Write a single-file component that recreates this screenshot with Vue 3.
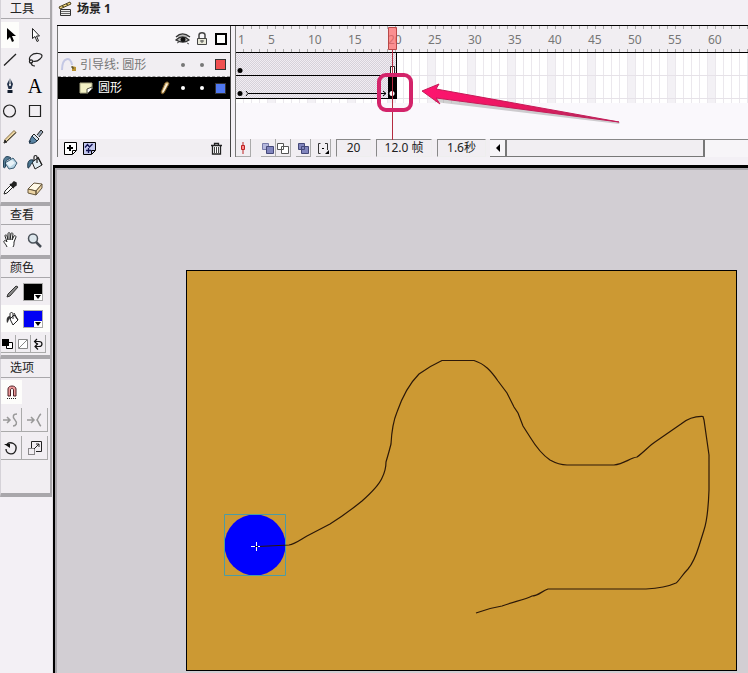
<script setup>
const majors = Array.from({ length: 13 }, (_, i) => i * 5)

const tools = [
  { name: 'Arrow', icon: 'arrow', active: true },
  { name: 'Subselect', icon: 'subselect' },
  { name: 'Line', icon: 'line' },
  { name: 'Lasso', icon: 'lasso' },
  { name: 'Pen', icon: 'pen' },
  { name: 'Text', letter: 'A' },
  { name: 'Oval', icon: 'oval' },
  { name: 'Rectangle', icon: 'rect' },
  { name: 'Pencil', icon: 'pencil' },
  { name: 'Brush', icon: 'brush' },
  { name: 'Ink bottle', icon: 'ink' },
  { name: 'Paint bucket', icon: 'bucket' },
  { name: 'Eyedropper', icon: 'dropper' },
  { name: 'Eraser', icon: 'eraser' },
]
</script>

<template>
  <svg class="defs" aria-hidden="true">
    <symbol id="arrow" viewBox="0 0 18 18"><path d="M6 2v12l3-3 2 5 2-1-2-5h4z" fill="#000" /></symbol>
    <symbol id="subselect" viewBox="0 0 18 18"><path d="M6.500 2.500v10l2.500-2 2 5 1.500-.7-2-4.800h3z" fill="#fff" stroke="#222" /></symbol>
    <symbol id="line" viewBox="0 0 18 18"><path d="M3 14.500 15 3" stroke="#222" stroke-width="1.300" /></symbol>
    <symbol id="lasso" viewBox="0 0 18 18"><g fill="none" stroke="#222" stroke-width="1.200"><path d="M4 10C2 6 6 2 12 2.500c5 .5 5 3 2 5.500-2 2-5 3-8 2" /><circle cx="5" cy="10.500" r="1.600" /><path d="M5 11c0 3 1 4 4 4" /></g></symbol>
    <symbol id="pen" viewBox="0 0 18 18"><path d="M9 1 6 7l1.500 5h3L12 7z" fill="#23324a" /><path d="M9 1v7" stroke="#fff" /><circle cx="9" cy="8" r="1" fill="#fff" /><path d="M6.500 13h5v3h-5z" fill="#111c2c" /></symbol>
    <symbol id="oval" viewBox="0 0 18 18"><circle cx="8.500" cy="9" r="6" fill="none" stroke="#222" stroke-width="1.200" /></symbol>
    <symbol id="rect" viewBox="0 0 18 18"><path d="M3.500 3.500h11v11h-11z" fill="none" stroke="#222" stroke-width="1.200" /></symbol>
    <symbol id="pencil" viewBox="0 0 18 18"><path d="m3 15 1-3.500 9-9 2 2-9 9z" fill="#ecd4a0" stroke="#8a7448" /><path d="m3 15 1-3 2 2zM6 13l9-8.500" fill="#222" stroke="#333" /></symbol>
    <symbol id="brush" viewBox="0 0 18 18"><path d="m11 7 4-5 2 2-4 5" fill="#97a7b8" stroke="#222" /><path d="m8 6 5 5-2 2-5-5z" fill="#d6e2ec" stroke="#222" /><path d="m6 8 5 5c-2 2-4 3-8 2l2-2-2 1c1-2 2-4 3-6z" fill="#5a84a4" stroke="#1e3448" /></symbol>
    <symbol id="ink" viewBox="0 0 18 18"><path d="m4 9 8-5 4 5-3 5-5 1z" fill="#b8d4e4" stroke="#3a5c74" /><path d="m5 9 6-3 3 3-5 4z" fill="#e8f2f8" /><path d="M10 4C6 1 3 3 2.500 7v6c0 1 1.500 1 2 0V8c1-2 3-3 5.500-4z" fill="#547b94" stroke="#26455c" /></symbol>
    <symbol id="bucket" viewBox="0 0 18 18"><path d="m6 8 6-4 4 7-7 4z" fill="#e3edf4" stroke="#222" /><path d="m12 3 4 8M11 9V3c0-2-3-2-3 0v4" fill="none" stroke="#222" stroke-width="1.200" /><path d="M7 6C3 5 1 8 2 14c2 0 2-4 5-6z" fill="#4b7691" stroke="#193144" /></symbol>
    <symbol id="dropper" viewBox="0 0 18 18"><path d="m3 15 1-3 6-6 2 2-6 6z" fill="#fff" stroke="#222" /><path d="m9 5 4 4M10 6l3-3 2 1v2l-3 2z" stroke="#222" fill="#222" stroke-width="1.500" /></symbol>
    <symbol id="eraser" viewBox="0 0 18 18"><path d="m2 10 6-6 8 1-6 7z" fill="#fff8e6" stroke="#66563c" /><path d="m2 10 8 2v4l-8-2zM10 12l6-7v4l-6 7z" fill="#ecd4a4" stroke="#66563c" /></symbol>
    <symbol id="hand" viewBox="0 0 18 18"><path d="M6 16c-1-3-4-5-3-6s2 0 3 1L4 5c0-2 2-1 2 0l1 4V3c0-2 2-2 2 0v6l1-6c0-2 2-1 2 0l-1 6 2-4c1-1 2 0 2 1l-2 5c0 3 0 3-1 5" fill="#fff" stroke="#222" /></symbol>
    <symbol id="magnifier" viewBox="0 0 18 18"><circle cx="8" cy="7.500" r="4.500" fill="#dce6ec" stroke="#4b525a" stroke-width="1.500" /><path d="m11 11 5 5" stroke="#444a52" stroke-width="2.500" /></symbol>
    <symbol id="stroke" viewBox="0 0 18 18"><path d="m4 14 1-3 8-8 2 1-8 9z" fill="#888" stroke="#333" /></symbol>
    <symbol id="fill" viewBox="0 0 18 18"><path d="m7 9 4-4 4 5-5 5z" fill="#fff" stroke="#222" /><path d="M10 9V4c0-2-3-2-3 0v4M11 3l4 7" fill="none" stroke="#222" /><path d="M7 6C4 6 3 9 4 13c2-1 1-4 4-5z" fill="#333" /></symbol>
    <symbol id="bw" viewBox="0 0 14 14"><path d="M5.500 5.500h6v6h-6z" fill="#fff" stroke="#000" /><path d="M1 2h7v7H1z" /></symbol>
    <symbol id="none" viewBox="0 0 14 14"><path d="M2.500 2.500h9v9h-9zM3 11l8-8" fill="#fff" stroke="#888" /></symbol>
    <symbol id="swap" viewBox="0 0 14 14"><path d="M3 4.500h5c4 0 4 5 0 5H4M6 2 3.500 4.500 6 7M7 12.500l-3-3 3-3" fill="none" stroke="#111" stroke-width="1.200" /></symbol>
    <symbol id="magnet" viewBox="0 0 18 18"><path d="M5 13V6c0-4 8-4 8 0v7h-2.500V7c0-2-3-2-3 0v6z" fill="#e99" stroke="#4c1e24" /><path d="M4 15.500h5M10 15.500h4" stroke="#222" stroke-dasharray="1 1" /></symbol>
    <symbol id="smooth" viewBox="0 0 18 18"><path d="M1 9h6M5 6l3 3-3 3" fill="none" stroke="#999" stroke-width="1.500" /><path d="M15 3c-4 0-5 3-2 6s1 6-2 6" fill="none" stroke="#999" stroke-width="1.500" /></symbol>
    <symbol id="straight" viewBox="0 0 18 18"><path d="M1 9h6M5 6l3 3-3 3" fill="none" stroke="#999" stroke-width="1.500" /><path d="M15 3c-2 1-2 3-4 6 2 2 2 5 4 6" fill="none" stroke="#999" stroke-width="1.500" /></symbol>
    <symbol id="rotate" viewBox="0 0 18 18"><path d="M5 5c4-3 10 0 9 5-1 7-10 6-10 0" fill="none" stroke="#222" stroke-width="1.400" /><path d="M2 5h6v4z" fill="#111" /></symbol>
    <symbol id="scale" viewBox="0 0 18 18"><path d="M5.500 9V2.500h10v10H10" fill="none" stroke="#222" /><path d="M2.500 9.500h6v6h-6z" fill="none" stroke="#222" stroke-dasharray="1 1" /><path d="m8 10 5-5M10 5h3v3" fill="none" stroke="#222" /></symbol>
  </svg>

  <div class="app">
    <aside class="toolbox">
      <section class="group">
        <h2>工具</h2>
        <div class="tools">
          <button v-for="t in tools" :key="t.name" class="tool" :class="{ active: t.active }" :aria-label="t.name">
            <svg v-if="t.icon" class="i18"><use :href="'#' + t.icon" /></svg>
            <span v-else class="glyph">{{ t.letter }}</span>
          </button>
        </div>
      </section>
      <section class="group">
        <h2>查看</h2>
        <div class="pair view">
          <button class="tool" aria-label="Hand"><svg class="i18"><use href="#hand" /></svg></button>
          <button class="tool" aria-label="Zoom"><svg class="i18"><use href="#magnifier" /></svg></button>
        </div>
      </section>
      <section class="group">
        <h2>颜色</h2>
        <div class="color">
          <svg class="i18"><use href="#stroke" /></svg>
          <button class="swatch black" aria-label="Stroke color"><svg viewBox="0 0 8 6"><path d="M0 0h8v6H0z" fill="#fff" /><path d="M1 1h6L4 5z" /></svg></button>
        </div>
        <div class="color active">
          <svg class="i18"><use href="#fill" /></svg>
          <button class="swatch blue" aria-label="Fill color"><svg viewBox="0 0 8 6"><path d="M0 0h8v6H0z" fill="#fff" /><path d="M1 1h6L4 5z" /></svg></button>
        </div>
        <div class="trio">
          <button aria-label="Black and white"><svg><use href="#bw" /></svg></button>
          <button aria-label="No color"><svg><use href="#none" /></svg></button>
          <button aria-label="Swap colors"><svg><use href="#swap" /></svg></button>
        </div>
      </section>
      <section class="group options">
        <h2>选项</h2>
        <div class="pair">
          <button class="tool active" aria-label="Snap"><svg class="i18"><use href="#magnet" /></svg></button>
        </div>
        <div class="pair raised">
          <button class="tool" aria-label="Smooth"><svg class="i18"><use href="#smooth" /></svg></button>
          <button class="tool" aria-label="Straighten"><svg class="i18"><use href="#straight" /></svg></button>
        </div>
        <div class="pair raised">
          <button class="tool" aria-label="Rotate"><svg class="i18"><use href="#rotate" /></svg></button>
          <button class="tool" aria-label="Scale"><svg class="i18"><use href="#scale" /></svg></button>
        </div>
      </section>
    </aside>

    <main class="main">
      <header class="scene">
        <svg class="i16" viewBox="0 0 16 16">
          <path d="m2 6 11-5 1 2L3 8z" fill="#f3d878" stroke="#4c4120" /><path d="m5 5 2 1M9 3l2 1" stroke="#4c4120" />
          <path d="M3.500 8.500h10v6h-10z" fill="#eee" stroke="#333" /><path d="M4 10.500h9M4 12.500h9" stroke="#666" />
        </svg>
        <h1>场景 1</h1>
      </header>

      <section class="timeline">
        <div class="layers">
          <div class="row head">
            <span></span><span></span>
            <svg class="i16" viewBox="0 0 16 16"><path d="M1 6c4-4 9-4 14 0M1 9c4-4 9-4 13 0-4 3-8 3-13 0z" fill="#bbb" stroke="#333" stroke-width="1.300" /><circle cx="8" cy="8.500" r="2.500" fill="#111" /><path d="m2 12 2-1M12 12l2 1" stroke="#555" /></svg>
            <svg class="i16" viewBox="0 0 16 16"><path d="M5 7V4c0-3 6-3 6 0v3" fill="none" stroke="#444" stroke-width="1.500" /><path d="M3.500 7.500h9v6h-9z" fill="#e8e8d8" stroke="#444" /><path d="M6 10h4M8 9v3" stroke="#555" /></svg>
            <svg class="i16" viewBox="0 0 16 16"><path d="M3 3h10v10H3z" fill="#fff" stroke="#000" stroke-width="2" /></svg>
          </div>
          <div class="row guide">
            <span class="name">
              <svg class="i18" viewBox="0 0 18 18"><path d="M2 14C2 1 11 0 12 9" fill="none" stroke="#c4c8e4" stroke-width="2" /><path d="m12 10 4 1v4h-4z" fill="#b89130" /><path d="M12 10v2h2" fill="none" stroke="#443" /></svg>
              引导线: 圆形
            </span>
            <span></span><i class="dot"></i><i class="dot"></i><i class="chip red"></i>
          </div>
          <div class="row selected">
            <span class="name nested">
              <svg class="i16" viewBox="0 0 16 16"><path d="M2 3h12v6l-4 4H2z" fill="#f2f0c4" stroke="#aaa884" /><path d="M14 7 9 9v4h1l4-4z" fill="#fff" stroke="#554" /></svg>
              圆形
            </span>
            <svg class="i16" viewBox="0 0 16 16"><path d="M6 14 5 12l4-9c2-2 4-1 4 1L8 13z" fill="#e6c78f" stroke="#6b4f20" /><path d="m7 12 4-8" stroke="#fff" /></svg>
            <i class="dot"></i><i class="dot"></i><i class="chip blue"></i>
          </div>
          <div class="layer-tools">
            <button aria-label="Insert layer"><svg class="i16" viewBox="0 0 16 16"><path d="M2.500 2.500h12v8l-4 4h-8z" fill="#fff" stroke="#000" /><path d="M14 10.500h-3.500V14" fill="none" stroke="#000" /><path d="M8 5v6M5 8h6" stroke="#000" stroke-width="2" /></svg></button>
            <button aria-label="Add guide layer"><svg class="i16" viewBox="0 0 16 16"><path d="M2.500 2.500h12v8l-4 4h-8z" fill="#c4c8ee" stroke="#000" /><path d="M14 10.500h-3.500V14" fill="none" stroke="#000" /><path d="M4 7.500 6.500 4.500l2 2.500 3-3M7.500 8v5M5 10.500h5" fill="none" stroke="#101050" stroke-width="1.300" /></svg></button>
            <button class="trash" aria-label="Delete layer"><svg class="i16" viewBox="0 0 16 16"><path d="M3 5.500h11M6.500 5V3.500h4V5M4.500 6v8h8V6" fill="#fff" stroke="#222" stroke-width="1.300" /><path d="M6.500 7v6M8.500 7v6M10.500 7v6" stroke="#444" /></svg></button>
          </div>
        </div>

        <div class="frames">
          <div class="ruler">
            <span v-for="n in majors" :key="n" class="mark">{{ n || 1 }}</span>
          </div>
          <div class="track">
            <svg class="span" viewBox="0 0 161 46">
              <defs><pattern id="hatch" width="2" height="2" patternUnits="userSpaceOnUse"><path d="M0 0h2v2H0z" fill="#f1edf3" /><path d="M0 0h1v1H0zM1 1h1v1H1z" fill="#d6d2da" /></pattern></defs>
              <path d="M0 0h160v46H0z" fill="url(#hatch)" />
              <path d="M0 22.500h160M0 45.500h160M160.500 0v46" stroke="#000" />
              <circle cx="4" cy="17.500" r="2.500" /><circle cx="4" cy="40.500" r="2.500" />
              <path d="M12 40.500h138M10 38l2 2.500-2 2.500M147 38l3 2.500-3 2.500" fill="none" stroke="#000" />
              <path d="M152 23h8v23h-8z" /><path d="M154.500 13.500h4v8h-4z" fill="#fff" stroke="#222" />
              <circle cx="156" cy="40.500" r="2.500" fill="#fff" />
            </svg>
          </div>
          <svg class="playhead" viewBox="0 0 10 113"><path d="M.5.500h8v22h-8z" fill="#f66" fill-opacity=".7" stroke="#b84848" /><path d="M4.500 23v90" stroke="#b42c40" /></svg>
          <div class="status">
            <button aria-label="Center frame"><svg class="i14" viewBox="1 1 14 14"><path d="M8 2v12" stroke="#b22" /><path d="M6.500 5.500h3v4h-3z" fill="#f88" stroke="#b22" /></svg></button>
            <button class="gap" aria-label="Onion skin"><svg class="i14" viewBox="1 1 14 14"><path d="M2.500 3.500h6v6h-6z" fill="#b5b8de" stroke="#777aa8" /><path d="M6.500 6.500h7v7h-7z" fill="#8185bd" stroke="#444878" /></svg></button>
            <button aria-label="Onion skin outlines"><svg class="i14" viewBox="1 1 14 14"><path d="M2.500 3.500h6v6h-6zM6.500 6.500h7v7h-7z" fill="#fff" stroke="#555" /></svg></button>
            <button class="sep" aria-label="Edit multiple frames"><svg class="i14" viewBox="1 1 14 14"><path d="M3.500 3.500h6v6h-6zM6.500 6.500h7v7h-7z" fill="#8185bd" stroke="#444878" /></svg></button>
            <button class="sep" aria-label="Modify onion markers"><svg class="i14" viewBox="1 1 14 14"><path d="M5.500 3.500h-2v10h2M10 3.500h2.500V10" fill="none" stroke="#333" /><path d="M7 8h2v1H7zM14 10v4h-4z" /></svg></button>
            <span class="field n">20</span>
            <span class="field fps">12.0 帧</span>
            <span class="field sec">1.6秒</span>
            <div class="scroll">
              <button class="left" aria-label="Scroll left"><svg viewBox="0 0 6 8"><path d="M5 0v8L1 4z" /></svg></button>
              <div class="thumb"></div>
            </div>
          </div>
        </div>

        <svg class="callout" viewBox="0 0 250 56">
          <defs>
            <linearGradient id="pink" x1="0" x2="1"><stop offset="0" stop-color="#ff1470" /><stop offset=".5" stop-color="#e8175f" /><stop offset="1" stop-color="#a8325c" /></linearGradient>
          </defs>
          <rect x="4" y="5" width="32" height="35" rx="7" fill="none" stroke="#d3246a" stroke-width="4" />
          <path d="m60 28 185 24-1 2-184-22z" fill="#777" opacity=".35" />
          <path d="m47 21 17-7-3 5 183 33-183-24 4 6z" fill="url(#pink)" stroke="#c41c58" stroke-width="1" stroke-linejoin="round" />
        </svg>
      </section>

      <section class="workspace">
        <div class="stage">
          <svg viewBox="187 271 549 399">
            <circle cx="255" cy="545" r="30.500" fill="#0000fe" />
            <path d="M224.500 514.500h61v61h-61z" fill="none" stroke="#4c9ca4" />
            <path d="M258 546.500 289 545C295 544 300 540 307 536L330 524Q346 514 362 501C371 493 379 485 382 478Q386 470 386 462Q389 452 391 444Q392 424 397 412C404 392 411 382 419 374Q430 366 442 360.500H474C485 364 491 371 498 381L507 393 514 407 518 413 523 426 530 437C538 450 544 456 550 460Q559 465 567 465H614C624 464 630 458 637 457C644 452 649 446 655 442L681 424Q691 416 703 416.500L704 420 709 455V490Q708 518 704 530L699 546Q694 562 688 569C682 575 679 581 676 583Q665 588 646 589H548C542 591 538 596 532 596C524 600 516 601 502 606Q489 608 476 613" fill="none" stroke="#2c1808" stroke-width="1.200" />
            <path d="M251 546.500h9M256.500 542v9" stroke="#fff" /><path d="M255 546.500h3" stroke="#111" />
          </svg>
        </div>
      </section>
    </main>
  </div>
</template>

<style>
body { margin: 0; background: #f3f0f5; }
</style>

<style scoped>
* { box-sizing: border-box; }
.defs { position: absolute; width: 0; height: 0; }
.app { display: flex; min-height: 100vh; overflow: hidden; font: 12px/16px "Noto Sans", "Noto Sans CJK SC", sans-serif; color: #222; background: #f3f0f5; }
svg { display: block; flex: none; }
button { display: flex; align-items: center; justify-content: center; padding: 0; border: 0; background: none; font: inherit; }
.glyph { font: 20px/20px "Liberation Serif", serif; color: #000; }
.i18 { width: 18px; height: 18px; }
.i16 { width: 16px; height: 16px; }
.i14 { width: 14px; height: 14px; }
h1, h2 { margin: 0; font-size: 12px; line-height: 18px; }

.toolbox { width: 53px; flex: none; border-right: 1px solid #e4e1e6; }
.group { width: 52px; border-left: 1px solid #d5d2d8; border-right: 2px solid #a9a7ab; border-bottom: 4px solid #a9a7ab; background: #f1eef2; }
.group h2 { height: 19px; padding-left: 9px; font-weight: 400; border-bottom: 1px solid #a9a7ab; }
.tools { display: grid; grid-template-columns: 18px 32px; grid-template-rows: repeat(7, 1fr); height: 183px; padding: 3px 0 1px; }
.pair { display: grid; grid-template-columns: 21px 26px; height: 28px; padding: 2px 0; }
.view { height: 30px; grid-template-columns: 17px 32px; }
.active { background: #fdfdfb; }
.color { display: flex; align-items: center; gap: 2px; height: 27px; padding-left: 2px; }
.swatch { width: 20px; height: 18px; align-items: flex-end; justify-content: flex-end; border: 1px solid #aaa; }
.swatch svg { width: 8px; height: 6px; }
.black { background: #000; }
.blue { background: #0000f4; }
.trio { display: flex; height: 23px; padding: 3px 0 2px; }
.trio button { width: 15px; border-right: 1px solid #aaa; border-bottom: 1px solid #aaa; }
.trio svg { width: 14px; height: 14px; }
.options { height: 138px; }
.raised .tool { border-right: 1px solid #aaa; border-bottom: 1px solid #aaa; }

.main { display: flex; flex-direction: column; flex: 1; min-width: 0; }
.scene { display: flex; align-items: center; gap: 4px; height: 25px; padding: 0 0 7px 4px; }
.timeline { position: relative; display: flex; height: 132px; margin-left: 4px; border-top: 1px solid #000; }
.layers { display: flex; flex-direction: column; width: 174px; border-left: 1px solid #777; border-right: 1px solid #444; background: #faf8fc; }
.row { display: grid; grid-template-columns: 1fr 18px 19px 19px 19px; align-items: center; justify-items: center; height: 22px; }
.head { height: 27px; background: #f8f6f9; border-bottom: 1px solid #000; }
.guide { height: 24px; color: #777; background: #f1eef2; border-bottom: 1px dashed #999; }
.selected { color: #fff; background: #000; }
.name { display: flex; align-items: center; gap: 2px; justify-self: start; padding-left: 2px; }
.nested { gap: 4px; padding-left: 20px; }
.dot { width: 4px; height: 4px; border-radius: 50%; background: currentColor; }
.chip { width: 11px; height: 11px; border: 1px solid #333; }
.chip.red { background: #f05050; }
.chip.blue { background: #5078f0; }
.layer-tools { display: flex; align-items: center; gap: 3px; height: 18px; margin-top: auto; padding: 0 6px 0 4px; background: #f1eef2; }
.trash { margin-left: auto; }

.frames { position: relative; flex: 1; min-width: 0; display: flex; flex-direction: column; margin-left: 4px; border-left: 1px solid #777; background: #faf8fc; }
.ruler {
  display: flex; height: 27px; overflow: hidden; color: #777; line-height: 28px; border-bottom: 1px solid #000;
  background: repeating-linear-gradient(90deg, transparent 0 7px, #aaa 7px 8px) 0 0 / 100% 3px no-repeat,
    repeating-linear-gradient(90deg, transparent 0 7px, #aaa 7px 8px) 0 100% / 100% 3px no-repeat, #f1eef2;
}
.mark { flex: 0 0 40px; }
.mark:first-child { flex-basis: 32px; padding-left: 2px; }
.track {
  height: 50px;
  background: linear-gradient(#e6e2e8, #e6e2e8) 0 22px / 100% 1px no-repeat, linear-gradient(#e6e2e8, #e6e2e8) 0 45px / 100% 1px no-repeat,
    repeating-linear-gradient(90deg, transparent 0 7px, #ebe8ed 7px 8px), repeating-linear-gradient(90deg, #fff 0 32px, #f3f1f5 32px 40px);
}
.span { width: 161px; height: 46px; }
.playhead { position: absolute; left: 152px; top: 1px; width: 10px; height: 113px; }
.status { display: flex; height: 18px; margin-top: auto; background: #f1eef2; }
.status > button { width: 15px; border-right: 1px solid #aaa; border-bottom: 1px solid #aaa; }
.status .gap { margin-left: 10px; }
.status .sep { margin-left: 5px; }
.field { margin-left: 5px; border: 1px solid #eee; border-left-color: #888; border-top-color: #888; text-align: center; }
.n { width: 35px; }
.fps { width: 56px; }
.sec { width: 49px; }
.scroll { display: flex; flex: 1; margin-left: 4px; border-top: 1px solid #888; background: #f7f5f8; }
.left { width: 16px; border-bottom: 1px solid #777; border-right: 1px solid #777; }
.left svg { width: 6px; height: 8px; }
.thumb { width: 77%; background: #f1eef2; border: 1px solid #777; border-width: 0 2px 1px 1px; }
.callout { position: absolute; left: 318px; top: 44px; width: 250px; height: 56px; }

.workspace { flex: 1; margin-top: 8px; padding: 102px 11px 0 131px; border-top: 3px solid #000; border-left: 2px solid #000; box-shadow: inset 2px 2px 0 #aaa7ac; background: #d2ced3; }
.stage { border: 1px solid #000; background: #cc9933; }
.stage svg { width: 100%; height: auto; }
</style>
